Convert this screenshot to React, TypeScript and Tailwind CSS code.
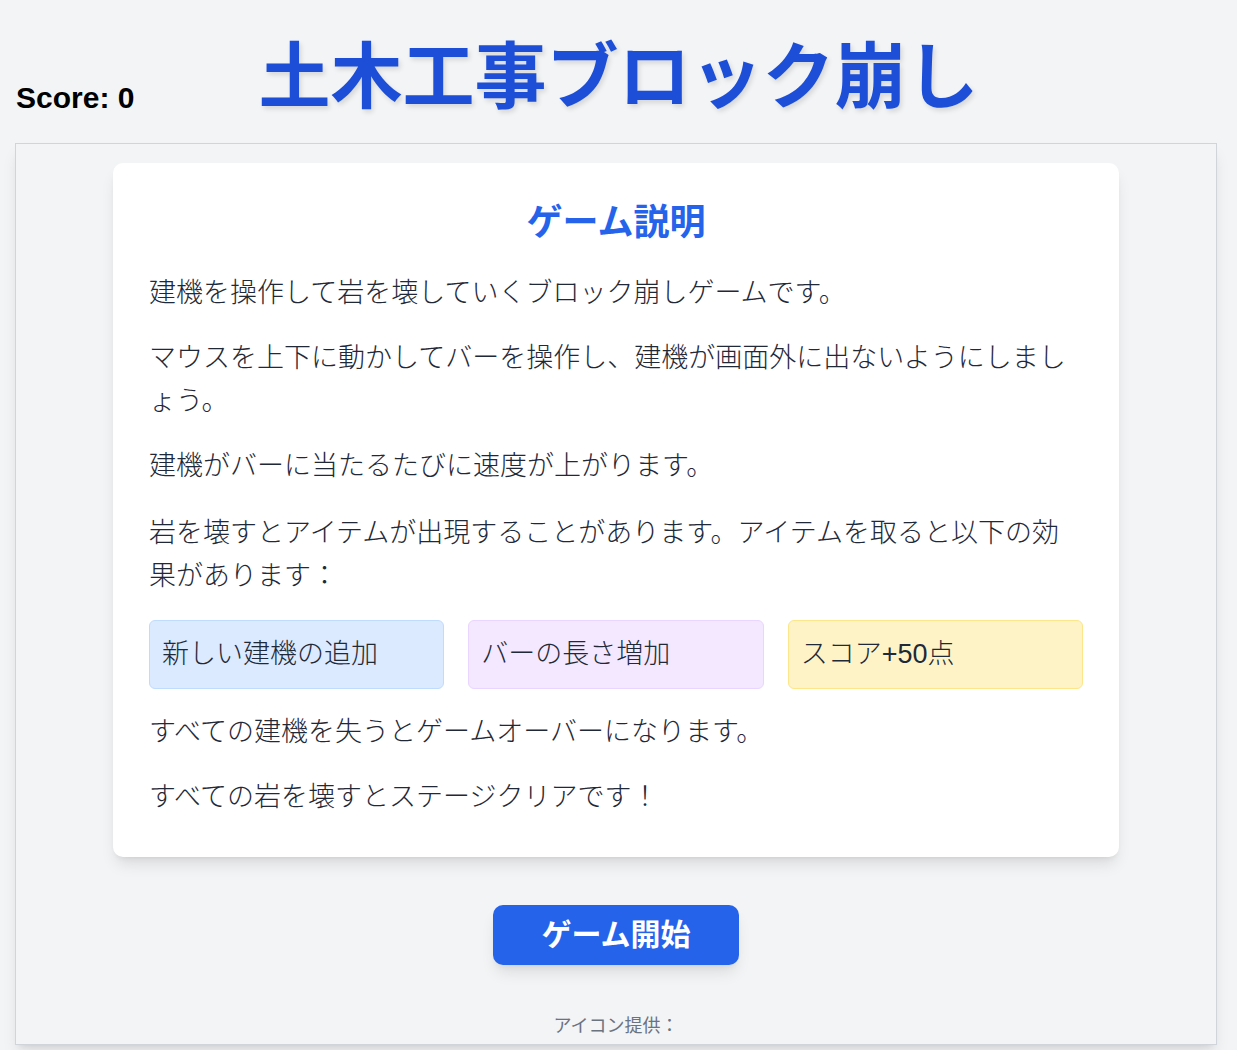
import React from 'react';

const FONT = '"Liberation Sans", "Noto Sans CJK JP", sans-serif';

const items = [
  { label: '新しい建機の追加', cls: 'bg-[#dbeafe] border-[#bfdbfe]' },
  { label: 'バーの長さ増加', cls: 'bg-[#f3e8ff] border-[#e9d5ff]' },
  { label: 'スコア+50点', cls: 'bg-[#fef3c7] border-[#fde68a]' },
];

export default function App() {
  return (
    <div className="min-h-screen bg-[#f3f4f6] text-[#1f2937]" style={{ fontFamily: FONT }}>
      {/* header */}
      <div className="grid grid-cols-[1fr_auto_1fr] pt-[41px] pb-[27px] px-4">
        <div className="self-start pt-[39px] text-[30px] leading-[36px] font-bold text-black">
          Score: 0
        </div>
        <h1 className="text-[72px] leading-[72px] font-bold text-[#1d4ed8] [text-shadow:2px_3px_5px_rgba(0,0,0,0.12)]">
          土木工事ブロック崩し
        </h1>
        <div />
      </div>

      {/* game area */}
      <div className="ml-[15px] w-[1202px] h-[902px] border border-[#d1d5db] bg-[#f3f4f6] shadow-lg flex flex-col items-center">
        <div className="mt-[19px] w-[1006px] bg-white rounded-[10px] shadow-lg px-9 pt-[33px] pb-[38px]">
          <h2 className="text-center text-[36px] leading-[54px] font-bold text-[#2563eb] mb-[22px]">
            ゲーム説明
          </h2>
          <div className="flex flex-col gap-[22px] text-[27px] leading-[43px] font-light">
            <p>建機を操作して岩を壊していくブロック崩しゲームです。</p>
            <p>
              マウスを上下に動かしてバーを操作し、建機が画面外に出ないようにしまし
              <br />
              ょう。
            </p>
            <p>建機がバーに当たるたびに速度が上がります。</p>
            <p className="mt-[2px]">
              岩を壊すとアイテムが出現することがあります。アイテムを取ると以下の効
              <br />
              果があります：
            </p>
            <div className="grid grid-cols-3 gap-6">
              {items.map((it) => (
                <div key={it.label} className={`border rounded-md px-3 py-3 ${it.cls}`}>
                  {it.label}
                </div>
              ))}
            </div>
            <p>すべての建機を失うとゲームオーバーになります。</p>
            <p>すべての岩を壊すとステージクリアです！</p>
          </div>
        </div>

        <button className="mt-12 px-12 py-3 bg-[#2563eb] text-white text-[30px] leading-[36px] font-bold rounded-[10px] shadow-lg">
          ゲーム開始
        </button>

        <p className="mt-[48px] text-[18px] leading-[27px] text-[#6b7280]">アイコン提供：</p>
      </div>
    </div>
  );
}
